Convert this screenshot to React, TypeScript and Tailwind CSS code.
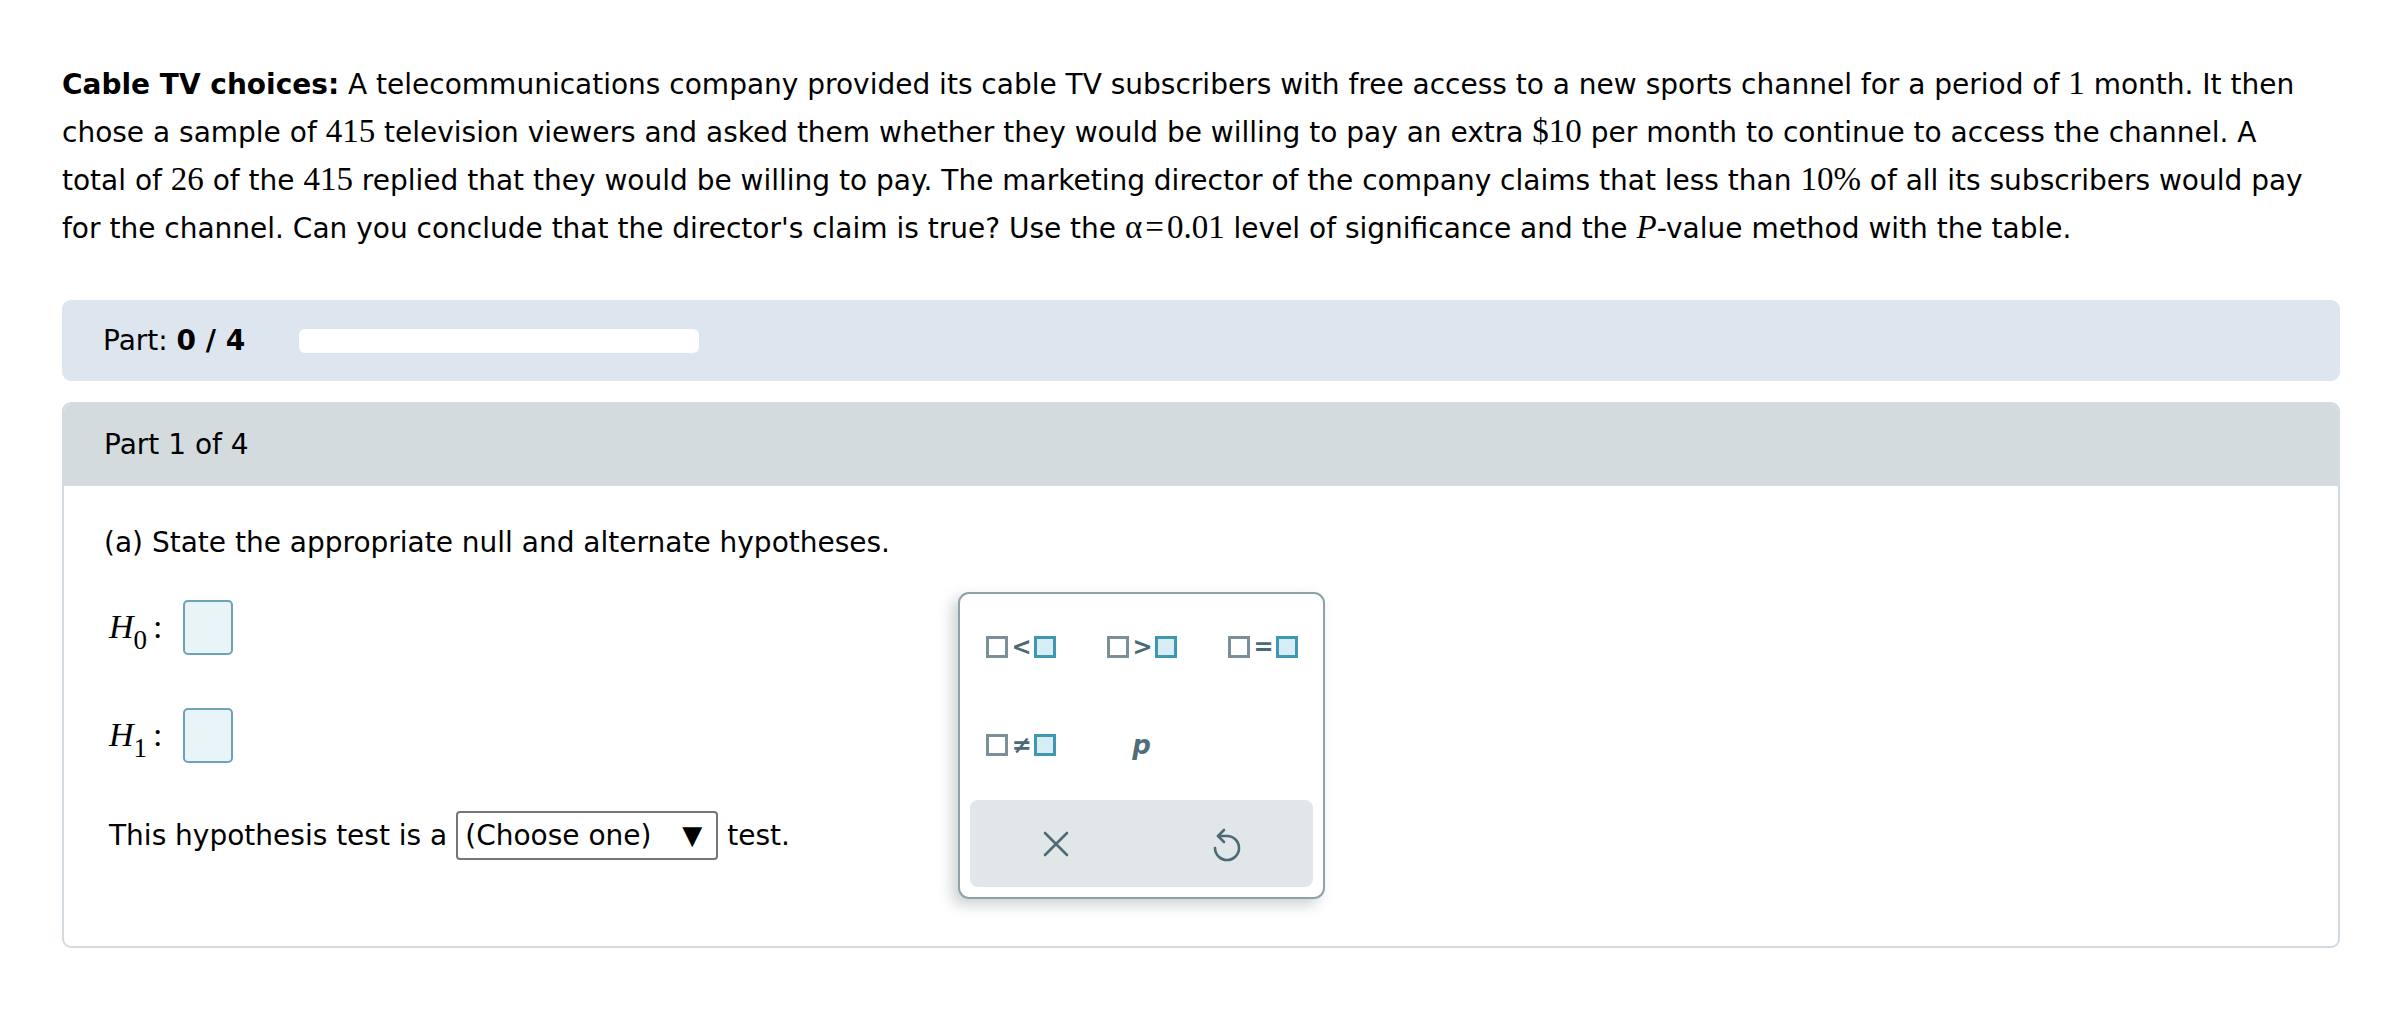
const serif = "font-['Liberation_Serif','Times_New_Roman',serif]";

function M({ children, italic }: { children: React.ReactNode; italic?: boolean }) {
  return (
    <span className={`${serif} text-[33px] leading-none ${italic ? "italic" : ""}`}>
      {children}
    </span>
  );
}

function Relation({ op }: { op: string }) {
  return (
    <div className="flex items-center gap-[4px]">
      <span className="block h-[22px] w-[22px] border-[3px] border-[#7b8f98] bg-white" />
      <span className="w-[18px] text-center text-[24px] font-bold leading-none text-[#4a6a75]">
        {op}
      </span>
      <span className="block h-[22px] w-[22px] border-[3px] border-[#3f97b1] bg-[#d5edf3]" />
    </div>
  );
}

function CloseIcon() {
  return (
    <svg width="26" height="26" viewBox="0 0 26 26" fill="none" stroke="#4d6b77" strokeWidth="2.6" strokeLinecap="round">
      <path d="M2 2 24 24M24 2 2 24" />
    </svg>
  );
}

function UndoIcon() {
  return (
    <svg width="30" height="36" viewBox="0 0 30 36" fill="none" stroke="#4d6b77" strokeWidth="2.6" strokeLinecap="round" strokeLinejoin="round">
      <path d="M3 22a12 12 0 1 0 12-12H6" />
      <path d="M12 4 6 10l6 6" />
    </svg>
  );
}

function Hypothesis({ sub }: { sub: string }) {
  return (
    <div className="flex h-[56px] items-center">
      <span className={`${serif} w-[74px] text-[34px] leading-none`}>
        <span className="italic">H</span>
        <span className="relative top-[11px] text-[27px]">{sub}</span>
        <span className="ml-[6px]">:</span>
      </span>
      <span className="block h-[55px] w-[50px] rounded-[5px] border-2 border-[#6aa3b3] bg-[#e9f4f8]" />
    </div>
  );
}

export default function App() {
  return (
    <div className="min-h-screen bg-white pl-[62px] pr-[46px] pt-[61px] font-['DejaVu_Sans',Verdana,sans-serif] text-[28px] text-black">
      <p className="leading-[48px] whitespace-nowrap">
        <b>Cable TV choices:</b> A telecommunications company provided its cable TV subscribers with free access to a new sports channel for a period of <M>1</M> month. It then
        <br />
        chose a sample of <M>415</M> television viewers and asked them whether they would be willing to pay an extra <M>$10</M> per month to continue to access the channel. A
        <br />
        total of <M>26</M> of the <M>415</M> replied that they would be willing to pay. The marketing director of the company claims that less than <M>10%</M> of all its subscribers would pay
        <br />
        for the channel. Can you conclude that the director's claim is true? Use the <M>α<span className="mx-[3px]">=</span>0.01</M> level of significance and the <M italic>P</M>-value method with the table.
      </p>

      <div className="mt-[47px] flex h-[81px] items-center rounded-[9px] bg-[#dde6ee] pl-[41px]">
        <span>
          Part: <b>0 / 4</b>
        </span>
        <div className="ml-[54px] h-[24px] w-[400px] rounded-[6px] bg-white" />
      </div>

      <div className="mt-[21px] rounded-[9px] border-2 border-[#d3dbe0]">
        <div className="flex h-[82px] items-center rounded-t-[7px] bg-[#d3dbdf] pl-[40px]">
          Part 1 of 4
        </div>
        <div className="relative h-[460px] pl-[40px] pt-[39px]">
          <p className="leading-[36px]">(a) State the appropriate null and alternate hypotheses.</p>

          <div className="ml-[5px] mt-[38px]">
            <Hypothesis sub="0" />
          </div>
          <div className="ml-[5px] mt-[52px]">
            <Hypothesis sub="1" />
          </div>

          <div className="ml-[5px] mt-[48px] flex items-center">
            <span>This hypothesis test is a</span>
            <div className="mx-[9px] flex h-[49px] w-[262px] items-center justify-between rounded-[4px] border-2 border-[#767676] pl-[7px] pr-[14px]">
              <span>(Choose one)</span>
              <span className="text-[26px]">▼</span>
            </div>
            <span>test.</span>
          </div>

          <div className="absolute left-[894px] top-[106px] w-[367px] rounded-[11px] border-2 border-[#8ea2aa] bg-white px-[10px] pb-[10px] pt-[4px] shadow-[-6px_6px_14px_rgba(60,70,80,0.25)]">
            <div className="-mx-[10px] grid grid-cols-3">
              <div className="flex h-[98px] items-center justify-center">
                <Relation op="<" />
              </div>
              <div className="flex h-[98px] items-center justify-center">
                <Relation op=">" />
              </div>
              <div className="flex h-[98px] items-center justify-center">
                <Relation op="=" />
              </div>
              <div className="flex h-[98px] items-center justify-center">
                <Relation op="≠" />
              </div>
              <div className="flex h-[98px] items-center justify-center">
                <span className="text-[26px] font-bold italic text-[#4f6e7a]">p</span>
              </div>
              <div />
            </div>
            <div className="mt-[6px] grid h-[87px] grid-cols-2 rounded-[8px] bg-[#e1e6e9]">
              <div className="flex items-center justify-center">
                <CloseIcon />
              </div>
              <div className="flex items-center justify-center">
                <UndoIcon />
              </div>
            </div>
          </div>
        </div>
      </div>
    </div>
  );
}
